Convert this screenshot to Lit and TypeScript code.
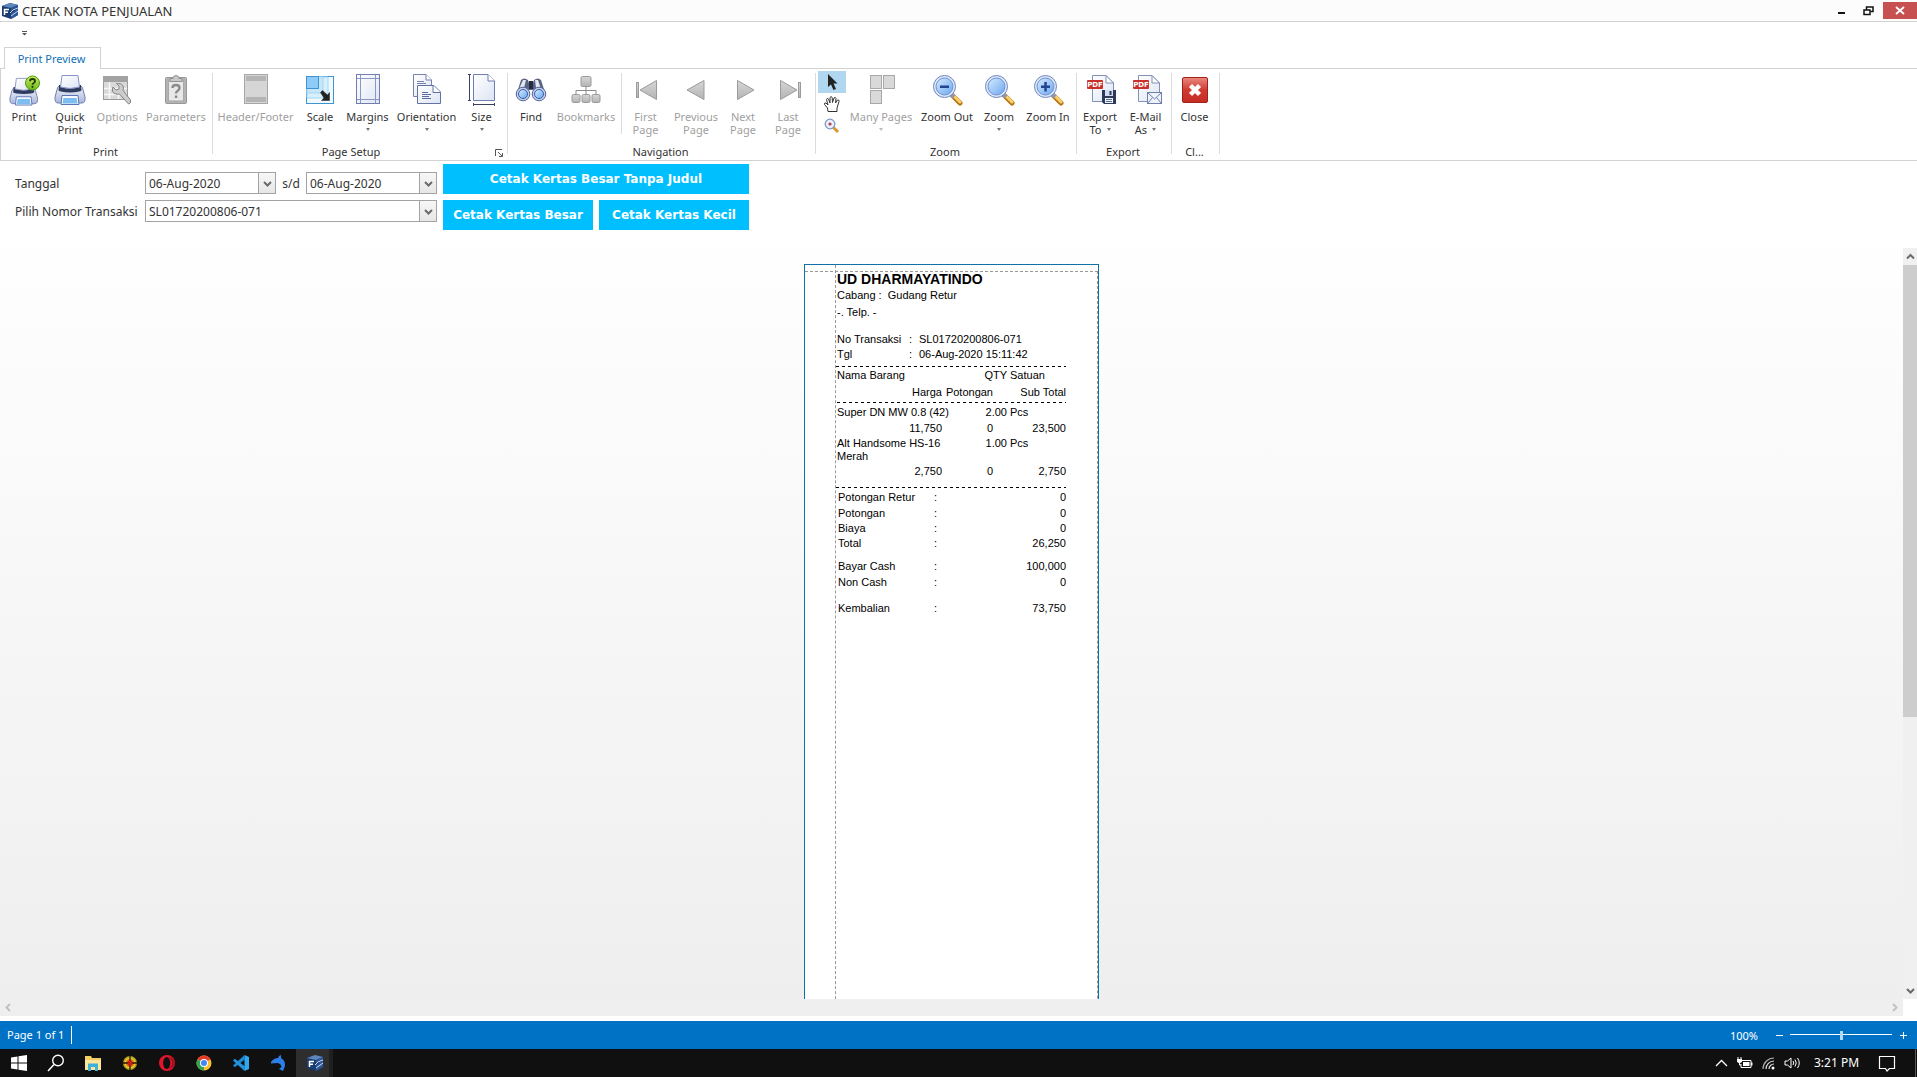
import { LitElement, html, svg, css, nothing } from "lit";
import { customElement } from "lit/decorators.js";
import { classMap } from "lit/directives/class-map.js";

const icon32 = (body: unknown) => html`<svg class="i32" viewBox="0 0 32 32" aria-hidden="true">${body}</svg>`;

const printer = svg`
  <path d="M6 12 H26 Q28 12 28.500 14 L31 23 Q31.500 29 28 29 H4 Q.500 29 1 23 L3.500 14 Q4 12 6 12Z" fill="url(#g-body)" stroke="#6f7fae"/>
  <path d="M5 11 H27 L27.500 16.500 Q26 18 16 18.500 Q6 18 4.500 16.500Z" fill="#2f3c5f"/>
  <path d="M8 1.500 H24 L25.500 13 Q16 16 6.500 13Z" fill="url(#g-paper)" stroke="#8b94c4"/>
  <path d="M8 21.500 H24 L25 30.500 H7Z" fill="#f4faff" stroke="#5d75b3"/>
  <path d="M9.500 24 H22.500 L23.500 29.500 H8.500Z" fill="#7dbdf0"/>`;

const lens = (mark: unknown) => svg`
  <path d="M20 20 L29 29" stroke="#b87414" stroke-width="5" stroke-linecap="round"/>
  <path d="M21 20 L29 28" stroke="#fbcf6a" stroke-width="3" stroke-linecap="round"/>
  <path d="M19 19 L23 23" stroke="#8d97b2" stroke-width="4"/>
  <circle cx="13.500" cy="12.500" r="11" fill="#dfe8f8" stroke="#6f87bd"/>
  <circle cx="13.500" cy="12.500" r="8.500" fill="url(#g-lens)" stroke="#6b90d8"/>
  ${mark}`;

const pdf = svg`
  <path d="M8.500 1.500 H22 L29.500 9 V27.500 H8.500Z" fill="url(#g-paper)" stroke="#8390b8"/>
  <path d="M22 1.500 V9 H29.500Z" fill="#fff" stroke="#8390b8"/>
  <rect x="3" y="6" width="16" height="9" rx="1" fill="#c9302c"/>
  <text x="11" y="13" class="pdf">PDF</text>`;

const icons: Record<string, unknown> = {
  print: svg`<g transform="translate(1 3) scale(.92)">${printer}</g><circle cx="24.500" cy="9" r="7" fill="url(#g-green)" stroke="#4f9a10"/>
    <path d="M22 7.300 Q22 5 24.500 5 T27 7.300 Q27 8.500 25.500 9.200 Q24.500 9.700 24.500 10.800" fill="none" stroke="#223808" stroke-width="1.800"/><circle cx="24.500" cy="12.800" r="1.100" fill="#223808"/>`,
  quick: printer,
  options: svg`<rect x="2.500" y="2.500" width="24" height="23" fill="#d9d9d9" stroke="#9a9a9a"/><path d="M2 2 H27 V8 H2Z" fill="#a2a2a2"/>
    <path d="M3 14.500 H26 M3 20.500 H26 M8.500 8 V25 M17.500 8 V25" stroke="#f7f7f7" stroke-width="1.500"/>
    <path d="M12 13 L15 16 L18 15 L18 12 L15.500 9.500 Q20 8.500 22 12 Q23 14 22 16.500 L29.500 26 Q30.500 29.500 27.500 30 L18.500 20 Q13 21 11.500 17 Q11 15 12 13Z" fill="#cdcdcd" stroke="#858585"/>`,
  params: svg`<rect x="5.500" y="3.500" width="21" height="26" rx="1" fill="#b3b3b3" stroke="#989898"/><rect x="8.500" y="7" width="15" height="20" fill="#e8e8e8" stroke="#a8a8a8"/>
    <path d="M10 7.500 V4.500 H13 Q13 1.500 16 1.500 T19 4.500 H22 V7.500Z" fill="#c9c9c9" stroke="#929292"/>
    <path d="M12.500 14 Q12.500 11 16 11 T19.500 14 Q19.500 16 17.500 17 Q16 17.800 16 19.500" fill="none" stroke="#8a8a8a" stroke-width="2.400"/><rect x="14.800" y="21.500" width="2.500" height="2.500" fill="#8a8a8a"/>`,
  hf: svg`<rect x="4.500" y="0.500" width="23" height="29" fill="#d6d6d6" stroke="#a6a6a6"/><rect x="6" y="2" width="20" height="5" fill="#b4b4b4"/><rect x="6" y="23" width="20" height="5" fill="#b4b4b4"/>`,
  scale: svg`<rect x="2.500" y="2.500" width="27" height="27" fill="#eff9fe" stroke="#3d94cf"/>
    <path d="M3 3 H24 V24 H3Z" fill="#d8effc" stroke="#a5d6f2"/><path d="M3 3 H19 V19 H3Z" fill="#c6e6fa" stroke="#a5d6f2"/>
    <rect x="2.500" y="2.500" width="12" height="12" fill="#8ecbf9" stroke="#3d94cf"/>
    <path d="M16.500 18.500 L18.500 16.500 L23.500 21 L25.500 18.500 V26.500 H17.500 L20 24Z" fill="#222" stroke="#222" stroke-width=".5"/>`,
  margins: svg`<rect x="4.500" y="0.500" width="23" height="29" fill="url(#g-paper)" stroke="#6f7eae"/><path d="M8.500 1 V29 M23.500 1 V29 M5 4.500 H27 M5 25.500 H27" stroke="#8a97c0"/>`,
  orient: svg`<path d="M2.500 .500 H15 L20.500 6 V22.500 H2.500Z" fill="url(#g-paper)" stroke="#7482ad"/><path d="M15 .500 V6 H20.500" fill="#fff" stroke="#7482ad"/><path d="M6 7.500 H13 M6 9.500 H15" stroke="#7482ad"/>
    <path d="M6.500 11.500 H23 L29.500 18 V29.500 H6.500Z" fill="url(#g-paper)" stroke="#6272a3"/><path d="M22 11.500 V18.500 H29.500" fill="#fff" stroke="#6272a3"/><path d="M11 18.500 H17 M11 20.500 H20 M11 22.500 H18 M11 24.500 H20" stroke="#5a6b9d"/>`,
  size: svg`<path d="M7.500 .500 H22 L28.500 7 V26.500 H7.500Z" fill="url(#g-paper)" stroke="#6f7eae"/><path d="M22 .500 V7 H28.500" fill="#fff" stroke="#6f7eae"/>
    <path d="M3.500 .500 V26.500 M2 .500 H5 M2 26.500 H5 M7.500 30.500 H28.500 M7.500 29 V32 M28.500 29 V32" stroke="#3b4260"/>`,
  find: svg`<path d="M1.500 20 L6 6 Q9 3 13 6 L14 9 H18 L19 6 Q23 3 26 6 L30.500 20 L19 22 L18 16 H14 L13 22Z" fill="#596383"/>
    <path d="M4 15 L8 6 L11 6 L9 14Z M21 14 L20 6 L23 6 L26 15Z" fill="#e3e7f0"/><rect x="14" y="7" width="4" height="8" fill="#252c42"/>
    <circle cx="8" cy="20" r="6.800" fill="#c6cee6" stroke="#55659a"/><circle cx="24" cy="20" r="6.800" fill="#c6cee6" stroke="#55659a"/>
    <circle cx="8" cy="20" r="4.500" fill="url(#g-lens)" stroke="#2b62b0"/><circle cx="24" cy="20" r="4.500" fill="url(#g-lens)" stroke="#2b62b0"/>`,
  bookmarks: svg`<path d="M16 13 V20 M6 20 V16.500 H26 V20" fill="none" stroke="#8b8b8b"/><g fill="url(#g-gray)" stroke="#999"><rect x="11" y="2.500" width="10" height="10" rx="1.500"/><rect x="2" y="20.500" width="8" height="8" rx="1.500"/><rect x="12" y="20.500" width="8" height="8" rx="1.500"/><rect x="22" y="20.500" width="8" height="8" rx="1.500"/></g>`,
  first: svg`<g fill="url(#g-gray)" stroke="#9b9b9b"><path d="M26.500 6.500 V25.500 L10 16Z"/><rect x="6.500" y="8.500" width="2" height="15"/></g>`,
  prev: svg`<path d="M24 6.500 V25.500 L7 16Z" fill="url(#g-gray)" stroke="#9b9b9b"/>`,
  next: svg`<path d="M10.500 6.500 V25.500 L27 16Z" fill="url(#g-gray)" stroke="#9b9b9b"/>`,
  last: svg`<g fill="url(#g-gray)" stroke="#9b9b9b"><path d="M8.500 6.500 V25.500 L25 16Z"/><rect x="26.500" y="8.500" width="2" height="15"/></g>`,
  many: svg`<g fill="#d9d9d9" stroke="#a8a8a8"><rect x="5.500" y="1.500" width="11" height="13"/><rect x="18.500" y="1.500" width="11" height="13"/><rect x="5.500" y="16.500" width="11" height="13"/></g>`,
  zoomOut: lens(svg`<rect x="9" y="11.500" width="9" height="2.500" fill="#23458f"/>`),
  zoom: lens(nothing),
  zoomIn: lens(svg`<path d="M9 11.500 H12.300 V8 H14.800 V11.500 H18 V14 H14.800 V17.500 H12.300 V14 H9Z" fill="#23458f"/>`),
  exportTo: svg`${pdf}<path d="M18 16 H32 V30 H20 L18 28Z" fill="#2d3a56"/><rect x="21" y="16" width="8" height="6" fill="#cfdcf3"/><rect x="25.500" y="17" width="2" height="4" fill="#2d3a56"/><rect x="21" y="24" width="8" height="5" fill="#eef2fa"/><path d="M22 25.500 H28 M22 27.500 H28" stroke="#5b6c92"/>`,
  email: svg`${pdf}<rect x="17.500" y="18.500" width="14" height="11" fill="#eef2fb" stroke="#7080ad"/><path d="M18 19 L24.500 25 L31 19 M18 29 L22.500 23.500 M31 29 L26.500 23.500" fill="none" stroke="#7080ad"/>`,
  close: svg`<rect x="3.500" y="3.500" width="25" height="25" rx="1.500" fill="url(#g-red)" stroke="#a3201a"/><path d="M11.500 11.500 L20.500 20.500 M20.500 11.500 L11.500 20.500" stroke="#fff" stroke-width="4.500"/>`,
};

interface Tool { id: string; text: string[]; off?: boolean; drop?: "below" | "inline"; }

const groups: { name: string; cls: string; tools: Tool[] }[] = [
  { name: "Print", cls: "g-print", tools: [
    { id: "print", text: ["Print"] }, { id: "quick", text: ["Quick", "Print"] },
    { id: "options", text: ["Options"], off: true }, { id: "params", text: ["Parameters"], off: true } ] },
  { name: "Page Setup", cls: "g-setup", tools: [
    { id: "hf", text: ["Header/Footer"], off: true }, { id: "scale", text: ["Scale"], drop: "below" },
    { id: "margins", text: ["Margins"], drop: "below" }, { id: "orient", text: ["Orientation"], drop: "below" },
    { id: "size", text: ["Size"], drop: "below" } ] },
  { name: "Navigation", cls: "g-nav", tools: [
    { id: "find", text: ["Find"] }, { id: "bookmarks", text: ["Bookmarks"], off: true },
    { id: "first", text: ["First", "Page"], off: true }, { id: "prev", text: ["Previous", "Page"], off: true },
    { id: "next", text: ["Next", "Page"], off: true }, { id: "last", text: ["Last", "Page"], off: true } ] },
  { name: "Zoom", cls: "g-zoom", tools: [
    { id: "many", text: ["Many Pages"], off: true, drop: "below" }, { id: "zoomOut", text: ["Zoom Out"] },
    { id: "zoom", text: ["Zoom"], drop: "below" }, { id: "zoomIn", text: ["Zoom In"] } ] },
  { name: "Export", cls: "g-export", tools: [
    { id: "exportTo", text: ["Export", "To"], drop: "inline" }, { id: "email", text: ["E-Mail", "As"], drop: "inline" } ] },
  { name: "Cl...", cls: "g-close", tools: [{ id: "close", text: ["Close"] }] },
];

const items = [
  { name: "Super DN MW 0.8 (42)", qty: "2.00", unit: "Pcs", price: "11,750", cut: "0", sub: "23,500" },
  { name: "Alt Handsome HS-16 Merah", qty: "1.00", unit: "Pcs", price: "2,750", cut: "0", sub: "2,750" },
];
const totals = [
  [["Potongan Retur", "0"], ["Potongan", "0"], ["Biaya", "0"], ["Total", "26,250"]],
  [["Bayar Cash", "100,000"], ["Non Cash", "0"]],
  [["Kembalian", "73,750"]],
];

const logo = svg`<path d="M1 4 L9 1 L17 3 V13 L10 17 L1 14Z" fill="#1c3b70"/><path d="M1 4 L9 1 L17 3 L10 6Z" fill="#5d86bd"/><path d="M10 6 L17 3 V13 L10 17Z" fill="#2c5698"/>
  <path d="M3 7.500 H8 M3.500 7 V13 M3 10.300 H7" stroke="#fff" stroke-width="1.500"/><path d="M9 11 L12 8 L17 6 M10 14 L17 9" stroke="#c8dcf2" stroke-width="1"/>`;

const apps: [string, unknown][] = [
  ["Start", svg`<path d="M1 3.500 L7.500 2.500 V8.500 H1Z M8.500 2.300 L17 1 V8.500 H8.500Z M1 9.500 H7.500 V15.500 L1 14.500Z M8.500 9.500 H17 V17 L8.500 15.700Z" fill="#fff"/>`],
  ["Search", svg`<circle cx="11" cy="6.500" r="5.300" fill="none" stroke="#fff" stroke-width="1.400"/><path d="M7 10.500 L1 17" stroke="#fff" stroke-width="1.500"/>`],
  ["File Explorer", svg`<path d="M1 2 H7 L8 4 H17 V16 H1Z" fill="#f5cf63"/><path d="M1 6 H17 V16 H1Z" fill="#fde59a"/><path d="M4 9.500 H14 V17 H11 V13 H7 V17 H4Z" fill="#3fb0d8"/>`],
  ["Target", svg`<circle cx="9" cy="9" r="7" fill="#b8a91e"/><circle cx="9" cy="9" r="5.300" fill="#f0d42c"/><circle cx="9" cy="9" r="4" fill="#e06a1c"/><path d="M9 1 V17 M1 9 H17" stroke="#1c1404" stroke-width="1.300"/><circle cx="9" cy="9" r="2.500" fill="#c81c14"/>`],
  ["Opera", svg`<ellipse cx="9" cy="9" rx="8" ry="8" fill="#e0162b"/><ellipse cx="8.700" cy="9" rx="3.600" ry="6" fill="#101010"/><path d="M10 3.500 Q14 5 14 9 T10 14.500 Q15 15.500 17 9 Q15.500 2.500 10 3.500Z" fill="#a60f1e"/>`],
  ["Chrome", svg`<circle cx="9" cy="9" r="7.500" fill="#fbc02d"/><path d="M9 9 L2.500 5.250 A7.500 7.500 0 0 1 15.500 5.250Z" fill="#e23b2e"/><path d="M9 9 L2.500 5.250 A7.500 7.500 0 0 0 9 16.500Z" fill="#34a350"/><circle cx="9" cy="9" r="4" fill="#fff"/><circle cx="9" cy="9" r="3" fill="#4285f4"/>`],
  ["Visual Studio Code", svg`<path d="M12.500 1 L17 3 V15 L12.500 17 Z" fill="#31a8ee"/><path d="M12.500 1 L1 11.500 L2.800 13.200 L13 5.500Z" fill="#1d87d0"/><path d="M12.500 17 L1 6.500 L2.800 4.800 L13 12.500Z" fill="#2393dd"/>`],
  ["Dolphin", svg`<path d="M2 8 Q5 4 9 4 Q9.500 1.500 12 1 L12 4 Q16.500 6.500 16 12 L14 17 L10 15 L12.500 13 Q12 9.500 8.500 9 L2 9.500Z" fill="#2d7fe8"/>`],
  ["Nota", logo],
];

@customElement("app-root")
export class AppRoot extends LitElement {
  static styles = css`
    :host { display: block; font: 11px/13px "Noto Sans", "Open Sans", sans-serif; color: #333; }
    * { box-sizing: border-box; }
    button, input, select { font: inherit; color: inherit; margin: 0; padding: 0; border: 0; background: none; border-radius: 0; }
    svg { display: block; flex: none; }
    .window { display: flex; flex-direction: column; height: 100vh; overflow: hidden; background: #fff; }
    .title { display: flex; align-items: center; height: 22px; padding-left: 1px; background: #fcfcfc; border-bottom: 1px solid #d2d2d2; }
    .title h1 { flex: 1; margin: 0 0 0 3px; font-size: 13px; line-height: 20px; font-weight: 400; }
    .winbtn { width: 27px; height: 17px; display: grid; place-items: center; }
    .winbtn.red { width: 34px; margin-left: 1px; background: #c75050; }
    .qat { display: flex; height: 25px; padding: 8px 0 0 20px; }
    .qat button { height: 8px; }
    .tabs { display: flex; height: 21px; padding-left: 4px; }
    .tab { position: relative; z-index: 1; height: 22px; width: 97px; padding-right: 2px; text-align: center; white-space: nowrap; background: #fff; border: 1px solid #d2d2d2; border-bottom: 0; color: #1070b8; }
    .ribbon { display: flex; flex: none; height: 93px; border: 1px solid #d2d2d2; border-right: 0; }
    .group { display: grid; grid-template-rows: 75px 15px; position: relative; padding-right: 1px; background: linear-gradient(#dcdcdc, #dcdcdc) right 4px / 1px 81px no-repeat; }
    .tools { display: grid; padding-top: 5px; }
    .g-print .tools { grid-template-columns: 46px 46px 48px 70px; padding-right: 1px; }
    .g-setup .tools { grid-template-columns: 85px 44px 51px 67px 43px; padding-right: 4px; }
    .g-nav .tools { grid-template-columns: 46px 64px 55px 46px 48px 42px; padding-right: 6px; background: linear-gradient(#dcdcdc, #dcdcdc) 113px 4px / 1px 61px no-repeat; }
    .g-zoom .tools { grid-template-columns: 30px 70px 62px 42px 56px; }
    .g-export .tools { grid-template-columns: 46px 45px; padding-right: 3px; }
    .g-close .tools { grid-template-columns: 45px; padding-right: 2px; }
    .caption { text-align: center; line-height: 15px; padding-right: 2px; }
    .g-setup .caption { padding-right: 18px; }
    .tool { display: flex; flex-direction: column; align-items: center; white-space: nowrap; }
    .tool:disabled { color: #a0a0a0; }
    .i32 { width: 32px; height: 32px; margin-bottom: 4px; }
    .line { display: flex; align-items: center; gap: 5px; }
    .arrow { width: 0; height: 0; border: 2px solid transparent; border-top: 3px solid #777; border-bottom: 0; }
    .tool:disabled .arrow { border-top-color: #bbb; }
    .below { margin-top: 5px; }
    .pdf { font: bold 7px "DejaVu Sans", sans-serif; fill: #fff; text-anchor: middle; }
    .modes { display: flex; flex-direction: column; padding-left: 2px; margin-top: -3px; }
    .modes button { display: grid; place-items: center; width: 28px; height: 22px; }
    .modes .on { background: #b1d6f0; }
    .launch { position: absolute; right: 5px; bottom: 3px; }
    .main { flex: 1; min-height: 0; display: grid; grid-template-rows: 87px 1fr 17px; grid-template-columns: 1fr 14px; background: linear-gradient(#fff 0, #fff 60px, #eeeeee 100%); }
    .form { grid-column: 1 / 3; display: grid; grid-template-columns: 124px 292px 306px; grid-template-rows: 30px 30px; gap: 6px; padding: 3px 0 0 15px; font-size: 12px; white-space: nowrap; }
    .lab { height: 22px; line-height: 23px; }
    .first { align-self: end; }
    .dates { display: flex; align-self: end; justify-content: space-between; align-items: center; }
    .combo { position: relative; display: flex; height: 22px; border: 1px solid #a3a3a3; background: #fff; }
    .dates .combo { width: 131px; }
    .combo input, .combo select { flex: 1; min-width: 0; padding: 1px 0 0 3px; appearance: none; outline: 0; font-size: 12px; line-height: 19px; }
    .drop { width: 17px; display: grid; place-items: center; background: linear-gradient(#f7f7f7, #e6e6e6); border-left: 1px solid #a3a3a3; }
    .fold { position: absolute; right: 0; top: 0; bottom: 0; pointer-events: none; }
    .pair { display: grid; grid-template-columns: 1fr 1fr; gap: 6px; }
    .act { background: #00bfff; color: #fff; font: bold 12px/30px "DejaVu Sans", sans-serif; }
    .view { overflow: hidden; padding-top: 16px; display: flex; justify-content: center; align-items: flex-start; }
    .page { width: 295px; height: 1200px; background: #fff; border: 1px solid #1070a8; padding-top: 6px; }
    .sheet { height: 100%; padding-left: 30px; border-top: 1px dashed #999; border-right: 1px dashed #999; }
    .body { height: 1300px; margin-top: -7px; padding: 7px 31px 0 1px; border-left: 1px dashed #999; font: 11px/15px "Liberation Sans", Arial, sans-serif; color: #000; }
    .body h2 { margin: 0; font-size: 14px; line-height: 15px; white-space: nowrap; }
    .body p { margin: 0; }
    .branch { padding-top: 1px; }
    .phone { padding-top: 2px; }
    .meta { margin-top: 12px; }
    table { width: 100%; border-collapse: collapse; table-layout: fixed; }
    th, td { padding: 0; font-weight: 400; text-align: left; vertical-align: top; white-space: nowrap; }
    .num { text-align: right; }
    .meta .k { width: 72px; }
    .meta .c { width: 10px; }
    .rule { height: 1px; margin-left: -1px; background: repeating-linear-gradient(90deg, #000 0 3px, transparent 3px 6px); }
    .top { margin-top: 4px; }
    .lines .c1 { width: 105px; } .lines .c2 { width: 51px; } .lines .c3 { width: 14px; }
    .lines thead tr { height: 17px; }
    .lines thead tr:last-child { height: 18px; }
    .lines thead th { padding-top: 1px; }
    .lines .split { height: 3px; background: repeating-linear-gradient(90deg, #000 0 3px, transparent 3px 6px) 0 0 / 100% 1px no-repeat; }
    .lines .item { height: 16px; }
    .name { width: 116px; white-space: normal; line-height: 13px; padding: 1px 0; }
    .lines .unit { padding-left: 3px; }
    .lines tbody tr:last-child td { padding-bottom: 8px; }
    .sums { margin-top: 2px; }
    .sums .k { width: 97px; }
    .sums .c { width: 20px; }
    .sums th { padding-left: 1px; }
    .sums tbody tr:first-child > * { padding-bottom: 1px; }
    .sums tbody + tbody tr:first-child > * { padding-top: 8px; }
    .sums tbody:last-of-type tr:first-child > * { padding-top: 11px; }
    .vbar { display: flex; flex-direction: column; background: #f0f0f0; }
    .vbar button { height: 17px; display: grid; place-items: center; }
    .vtrack { flex: 1; }
    .vthumb { height: 63%; background: #cdcdcd; }
    .hbar { display: flex; justify-content: space-between; background: #efefef; }
    .hbar button { width: 17px; display: grid; place-items: center; }
    .corner { background: #fff; }
    .status { display: flex; flex: none; align-items: center; height: 28px; margin-top: 5px; padding: 0 7px; background: #0072c6; color: #fff; }
    .pages { width: 65px; line-height: 18px; border-right: 1px solid #fff; }
    .grow { flex: 1; }
    .step { width: 14px; height: 14px; display: grid; place-items: center; }
    .pct { margin-right: 14px; }
    .range { width: 102px; height: 12px; margin: 0 4px; appearance: none; background: linear-gradient(#fff, #fff) 0 5px / 100% 1px no-repeat; }
    .range::-webkit-slider-thumb { appearance: none; width: 3px; height: 9px; background: #b5d8f3; }
    .task { display: flex; flex: none; height: 28px; background: #101010; color: #fff; }
    .app { width: 37px; display: grid; place-items: center; }
    .app.on { background: #2e2e2e; box-shadow: inset -4px 0 #1f1f1f; }
    .tray { display: flex; align-items: center; gap: 8px; }
    .time { width: 53px; font-size: 12px; line-height: 16px; white-space: nowrap; padding-left: 5px; }
    .note { margin: 0 19px 0 8px; }
    .peek { align-self: stretch; width: 2px; margin-left: -8px; border-left: 1px solid #555; }
  `;

  private chevron(d: string, color = "#6a6a6a") {
    return html`<svg width="9" height="9" viewBox="0 0 9 9" aria-hidden="true"><path d=${d} fill="none" stroke=${color} stroke-width="2"/></svg>`;
  }

  private tool(t: Tool) {
    const last = t.text.length - 1;
    return html`<button class="tool" ?disabled=${t.off}>
      ${icon32(icons[t.id])}
      ${t.text.map((s, i) => html`<span class="line">${s}${t.drop === "inline" && i === last ? html`<i class="arrow"></i>` : nothing}</span>`)}
      ${t.drop === "below" ? html`<i class="arrow below"></i>` : nothing}
    </button>`;
  }

  private modes() {
    return html`<div class="modes">
      <button class="on" aria-label="Pointer"><svg width="16" height="18" viewBox="0 0 16 18"><path d="M4 1 V14 L7 11.500 L9.500 17 L12 16 L9.500 10.500 H13.500Z" fill="#222"/></svg></button>
      <button aria-label="Hand tool"><svg width="18" height="18" viewBox="0 0 18 18"><path d="M5 16.500 L4.500 13 L1.500 9.500 Q1 7.500 3 8 L5 10 L3.500 4.500 Q4 2.500 5.500 4 L7 8 L7 2.500 Q8 .500 9.200 2.500 L9.500 7.500 L11 3 Q12.500 1.500 13 3.500 L12.500 8 L14.500 5 Q16.500 4.500 16 6.500 L14 13 V16.500Z" fill="#fff" stroke="#333"/></svg></button>
      <button aria-label="Magnifier"><svg width="16" height="16" viewBox="0 0 16 16"><path d="M9 9 L14 14" stroke="#d9992c" stroke-width="3"/><circle cx="6" cy="6" r="4.800" fill="#e8f1fc" stroke="#8198c4" stroke-width="1.300"/><circle cx="6" cy="6" r="1.600" fill="#b23c4c"/></svg></button>
    </div>`;
  }

  private dateBox(label: string) {
    return html`<span class="combo"><input type="text" aria-label=${label} .value=${"06-Aug-2020"}><button type="button" class="drop" aria-label=${"Open " + label}>${this.chevron("M1 3 L4.500 6.500 L8 3")}</button></span>`;
  }

  private receipt() {
    return html`<article class="page"><div class="sheet"><div class="body">
      <h2>UD DHARMAYATINDO</h2>
      <p class="branch">Cabang : &nbsp;Gudang Retur</p>
      <p class="phone">-. Telp. -</p>
      <table class="meta">
        <tr><th class="k">No Transaksi</th><td class="c">:</td><td>SL01720200806-071</td></tr>
        <tr><th>Tgl</th><td>:</td><td>06-Aug-2020 15:11:42</td></tr>
      </table>
      <div class="rule top"></div>
      <table class="lines">
        <colgroup><col class="c1"><col class="c2"><col class="c3"><col></colgroup>
        <thead>
          <tr><th>Nama Barang</th><th class="num" colspan="2">QTY</th><th class="unit">Satuan</th></tr>
          <tr><th class="num">Harga</th><th class="num">Potongan</th><th></th><th class="num">Sub Total</th></tr>
        </thead>
        <tbody>
          <tr><td class="split" colspan="4"></td></tr>
          ${items.map((r) => html`
          <tr class="item"><td><div class="name">${r.name}</div></td><td class="num" colspan="2">${r.qty}</td><td class="unit">${r.unit}</td></tr>
          <tr><td class="num">${r.price}</td><td class="num">${r.cut}</td><td></td><td class="num">${r.sub}</td></tr>`)}
        </tbody>
      </table>
      <div class="rule"></div>
      <table class="sums">
        <colgroup><col class="k"><col class="c"><col></colgroup>
        ${totals.map((block) => html`<tbody>${block.map(([k, v]) => html`<tr><th>${k}</th><td>:</td><td class="num">${v}</td></tr>`)}</tbody>`)}
      </table>
    </div></div></article>`;
  }

  render() {
    return html`
      <div class="window">
        <header class="title">
          <svg width="18" height="18" viewBox="0 0 18 18" aria-hidden="true">${logo}</svg>
          <h1>CETAK NOTA PENJUALAN</h1>
          <button class="winbtn" aria-label="Minimize"><svg width="11" height="10" viewBox="0 0 11 10"><rect x="2" y="6" width="7" height="2" fill="#111"/></svg></button>
          <button class="winbtn" aria-label="Restore"><svg width="11" height="10" viewBox="0 0 11 10"><path d="M3.500 4 V1 H10 V5.500 H7.500" fill="none" stroke="#111" stroke-width="1.500"/><rect x="1" y="4" width="6" height="4.500" fill="#fff" stroke="#111" stroke-width="1.500"/></svg></button>
          <button class="winbtn red" aria-label="Close window"><svg width="10" height="9" viewBox="0 0 10 9"><path d="M1 1 L9 8 M9 1 L1 8" stroke="#fff" stroke-width="1.800"/></svg></button>
        </header>
        <div class="qat"><button aria-label="Customize toolbar"><svg width="8" height="8" viewBox="0 0 8 8"><path d="M2 1.500 H7" stroke="#555"/><path d="M2 3 H7 L4.500 5.500Z" fill="#555"/></svg></button></div>
        <nav class="tabs"><button class="tab">Print Preview</button></nav>
        <section class="ribbon">
          ${groups.map((g) => html`<div class=${classMap({ group: true, [g.cls]: true })}>
            <div class="tools">${g.cls === "g-zoom" ? this.modes() : nothing}${g.tools.map((t) => this.tool(t))}</div>
            <div class="caption">${g.name}</div>
            ${g.cls === "g-setup" ? html`<button class="launch" aria-label="Page setup dialog"><svg width="8" height="8" viewBox="0 0 8 8"><path d="M.500 7 V.500 H7" fill="none" stroke="#555"/><path d="M3 3 L7 7 M7.500 4 V7.500 H4" fill="none" stroke="#555"/></svg></button>` : nothing}
          </div>`)}
        </section>
        <main class="main">
          <form class="form" @submit=${(e: Event) => e.preventDefault()}>
            <span class="lab first">Tanggal</span>
            <div class="dates">${this.dateBox("Tanggal awal")}<span>s/d</span>${this.dateBox("Tanggal akhir")}</div>
            <button type="button" class="act">Cetak Kertas Besar Tanpa Judul</button>
            <label class="lab" for="trx">Pilih Nomor Transaksi</label>
            <span class="combo"><select id="trx"><option>SL01720200806-071</option></select><span class="drop fold">${this.chevron("M1 3 L4.500 6.500 L8 3")}</span></span>
            <div class="pair"><button type="button" class="act">Cetak Kertas Besar</button><button type="button" class="act">Cetak Kertas Kecil</button></div>
          </form>
          <section class="view">${this.receipt()}</section>
          <div class="vbar">
            <button aria-label="Scroll up">${this.chevron("M1 6.500 L4.500 3 L8 6.500")}</button>
            <div class="vtrack"><div class="vthumb"></div></div>
            <button aria-label="Scroll down">${this.chevron("M1 3 L4.500 6.500 L8 3")}</button>
          </div>
          <div class="hbar">
            <button aria-label="Scroll left">${this.chevron("M6 1 L2.500 4.500 L6 8", "#c2c2c2")}</button>
            <button aria-label="Scroll right">${this.chevron("M3 1 L6.500 4.500 L3 8", "#c2c2c2")}</button>
          </div>
          <div class="corner"></div>
        </main>
        <footer class="status">
          <span class="pages">Page 1 of 1</span><span class="grow"></span>
          <span class="pct">100%</span>
          <button class="step" aria-label="Decrease zoom"><svg width="7" height="7" viewBox="0 0 7 7"><path d="M0 3.500 H7" stroke="#fff"/></svg></button>
          <input class="range" type="range" aria-label="Zoom level" min="0" max="200" .value=${"100"}>
          <button class="step" aria-label="Increase zoom"><svg width="7" height="7" viewBox="0 0 7 7"><path d="M0 3.500 H7 M3.500 0 V7" stroke="#fff"/></svg></button>
        </footer>
        <div class="task">
          ${apps.map(([name, art], i) => html`<button class=${classMap({ app: true, on: i === apps.length - 1 })} aria-label=${name}><svg width="18" height="18" viewBox="0 0 18 18">${art}</svg></button>`)}
          <span class="grow"></span>
          <div class="tray">
            <svg width="13" height="16" viewBox="0 0 13 16"><path d="M1 11 L6.500 5.500 L12 11" fill="none" stroke="#fff" stroke-width="1.300"/></svg>
            <svg width="17" height="16" viewBox="0 0 17 16"><path d="M6 5.500 H15 V12.500 H5 V9" fill="none" stroke="#fff"/><path d="M7 7 H13.500 V11 H7Z M15 7.500 H16.500 V10.500 H15Z" fill="#fff"/><path d="M1 4 H6 V6.500 Q5.500 8 3.500 8 T1 6.500Z" fill="#fff"/><path d="M2 2 V4 M5 2 V4 M3.500 8 V10 H5" fill="none" stroke="#fff"/></svg>
            <svg width="15" height="16" viewBox="0 0 15 16"><g fill="none" stroke="#ddd" stroke-width="1.200"><path d="M2 14 A11 11 0 0 1 13 3" stroke="#aaa"/><path d="M5 14 A8 8 0 0 1 13 6"/><path d="M8 14 A5 5 0 0 1 13 9"/></g><circle cx="12" cy="13" r="1.500" fill="#fff"/></svg>
            <svg width="17" height="16" viewBox="0 0 17 16"><path d="M1 6 H3.500 L7 3 V13 L3.500 10 H1Z M9 6 Q10.500 8 9 10 M11 4.500 Q13.500 8 11 11.500 M13.500 3 Q17 8 13.500 13" fill="none" stroke="#fff"/></svg>
            <span class="time">3:21 PM</span>
            <svg class="note" width="18" height="18" viewBox="0 0 18 18"><path d="M1.500 2.500 H16.500 V14.500 H11.500 L9 17 L7.500 14.500 H1.500Z" fill="none" stroke="#fff" stroke-width="1.200"/></svg>
            <i class="peek"></i>
          </div>
        </div>
      </div>
      <svg width="0" height="0" aria-hidden="true"><defs>
        <linearGradient id="g-body" x2="0" y2="1"><stop offset="0" stop-color="#f3f5fb"/><stop offset="1" stop-color="#a9b6dc"/></linearGradient>
        <linearGradient id="g-paper" x2="1" y2="1"><stop offset="0" stop-color="#fff"/><stop offset="1" stop-color="#dde4f3"/></linearGradient>
        <linearGradient id="g-lens" x2="1" y2="1"><stop offset="0" stop-color="#d8ecff"/><stop offset="1" stop-color="#6aa6ee"/></linearGradient>
        <linearGradient id="g-green" x2="0" y2="1"><stop offset="0" stop-color="#c6ea5e"/><stop offset="1" stop-color="#6fb91c"/></linearGradient>
        <linearGradient id="g-gray" x2="0" y2="1"><stop offset="0" stop-color="#d6d6d6"/><stop offset="1" stop-color="#b4b4b4"/></linearGradient>
        <linearGradient id="g-red" x2="0" y2="1"><stop offset="0" stop-color="#ea8a80"/><stop offset=".5" stop-color="#cf3a30"/><stop offset="1" stop-color="#c62d24"/></linearGradient>
      </defs></svg>`;
  }
}
